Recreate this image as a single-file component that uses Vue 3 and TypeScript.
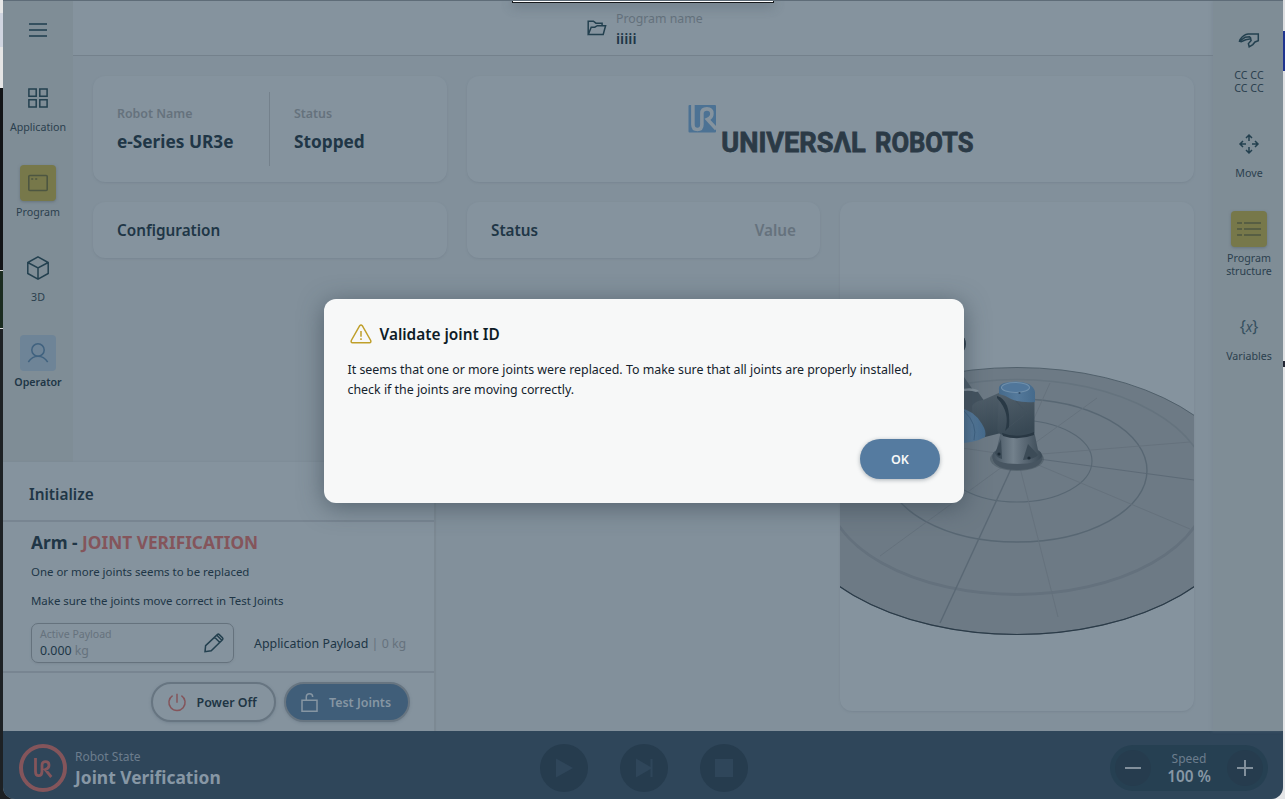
<script setup lang="ts">
interface NavItem {
  icon: string
  lines: string[]
  state?: 'active' | 'selected'
  spaced?: boolean
}

const leftNav: NavItem[] = [
  { icon: 'grid', lines: ['Application'] },
  { icon: 'program', lines: ['Program'], state: 'active' },
  { icon: 'cube', lines: ['3D'] },
  { icon: 'operator', lines: ['Operator'], state: 'selected' },
]

const rightNav: NavItem[] = [
  { icon: 'freedrive', lines: ['CC CC', 'CC CC'], spaced: true },
  { icon: 'move', lines: ['Move'] },
  { icon: 'list', lines: ['Program', 'structure'], state: 'active' },
  { icon: 'variables', lines: ['Variables'] },
]

interface Spoke {
  x: number
  y: number
  strong?: boolean
}

const spokes: Spoke[] = [
  { x: 940, y: 623, strong: true },
  { x: 1058, y: 617 },
  { x: 1194, y: 480, strong: true },
  { x: 1190, y: 529 },
  { x: 1190, y: 442 },
  { x: 1097, y: 398 },
  { x: 1050, y: 383 },
  { x: 880, y: 556 },
  { x: 955, y: 447 },
]
</script>

<template>
  <div class="desktop">
    <div class="edge edge-left">
      <i class="e1"></i><i class="e2"></i><i class="e3"></i><i class="e4"></i><i class="e5"></i><i class="e6"></i>
    </div>
    <div class="window">
      <div class="main">
        <nav class="side left">
          <svg class="burger" width="18" height="14" viewBox="0 0 18 14"><path d="M0 1h18M0 7h18M0 13h18" /></svg>
          <div v-for="item in leftNav" :key="item.icon" class="item" :class="item.state">
            <span class="box">
              <svg v-if="item.icon === 'grid'" width="20" height="20" viewBox="0 0 20 20"><path d="M.9.900h7.300v7.300H.9zM11.800.900h7.300v7.300h-7.300zM.9 11.800h7.300v7.300H.9zM11.800 11.800h7.300v7.300h-7.300z" /></svg>
              <svg v-else-if="item.icon === 'program'" width="20" height="18" viewBox="0 0 20 18"><rect x=".8" y="1.500" width="18.400" height="15" rx="1" /><path d="M3.200 5h2M7.200 5h2" /></svg>
              <svg v-else-if="item.icon === 'cube'" width="22" height="24" viewBox="0 0 22 24"><path d="M11 .9 21.200 6.500v11L11 23.100.8 17.500v-11zM.8 6.500 11 12l10.200-5.500M11 12v11" /></svg>
              <svg v-else width="22" height="20" viewBox="0 0 22 20"><circle cx="11" cy="7" r="6.200" /><path d="M1.300 19C4 15 7 13.200 11 13.200s7 1.800 9.700 5.800" /></svg>
            </span>
            <span v-for="(line, i) in item.lines" :key="i" class="label">{{ line }}</span>
          </div>
        </nav>

        <div class="center">
          <header class="topbar">
            <svg width="20" height="16" viewBox="0 0 20 16"><path d="M1.200 14.500V1.200h5.200l2.500 2h6.200v2.600M1.300 14.500 4.200 7.200h3.600l2.500-1.500h8.300l-2.400 8.800z" /></svg>
            <div><p class="pn">Program name</p><p class="pv">iiiii</p></div>
          </header>
          <section class="grid">
            <article class="card info">
              <div class="cell"><p class="k">Robot Name</p><p class="v">e-Series UR3e</p></div>
              <div class="cell second"><p class="k">Status</p><p class="v">Stopped</p></div>
            </article>
            <article class="card brand">
              <svg width="286" height="52" viewBox="688 104 286 52">
                <rect x="688.500" y="105" width="27.500" height="27.500" rx="1" fill="#4c7294" />
                <path d="M692.900 104.500v20q0 5 4.500 5t4.500-5v-11q0-4.600 5-4.600t5 4.800q0 3.800-4.400 5.700l8.800 9.600" fill="none" stroke="#85939e" stroke-width="3.600" />
                <text x="721.300" y="152.300" textLength="144.500" lengthAdjust="spacingAndGlyphs" class="wordmark">UNIVERSΛL</text>
                <text x="875" y="152.300" textLength="98.500" lengthAdjust="spacingAndGlyphs" class="wordmark">ROBOTS</text>
              </svg>
            </article>
            <article class="card title"><span>Configuration</span></article>
            <article class="card title"><span>Status</span><span class="muted">Value</span></article>
            <article class="card robot">
              <svg width="354" height="509" viewBox="840 202 354 509" preserveAspectRatio="xMidYMid slice">
                <defs>
                  <linearGradient id="base" x1="0" x2="1"><stop offset="0" stop-color="#43525f" /><stop offset=".42" stop-color="#73818c" /><stop offset=".6" stop-color="#5f6d79" /><stop offset="1" stop-color="#3a4955" /></linearGradient>
                  <linearGradient id="arm" x1="0" y1="0" x2=".3" y2="1"><stop offset="0" stop-color="#54626d" /><stop offset="1" stop-color="#384854" /></linearGradient>
                  <linearGradient id="cap" x1="0" x2="1"><stop offset="0" stop-color="#456a8b" /><stop offset=".5" stop-color="#54799b" /><stop offset="1" stop-color="#456a8b" /></linearGradient>
                </defs>
                <ellipse cx="1017" cy="501" rx="231" ry="133.500" fill="#6d7a85" stroke="#4c5b67" stroke-width=".9" />
                <path d="M786 501a231 133.500 0 0 0 462 0" fill="none" stroke="#2b3b48" stroke-width="1.200" />
                <ellipse cx="1017" cy="487" rx="191" ry="107.500" fill="none" stroke="#65737e" stroke-width="1.500" />
                <path d="M826 487a191 107.500 0 0 0 382 0" fill="none" stroke="#64717d" stroke-width="2.800" />
                <ellipse cx="1017" cy="470.500" rx="130" ry="71.500" fill="none" stroke="#586773" stroke-width="1.400" />
                <ellipse cx="1017" cy="461" rx="75" ry="41" fill="none" stroke="#586773" stroke-width="1.100" />
                <line v-for="(s, i) in spokes" :key="i" x1="1017" y1="456" :x2="s.x" :y2="s.y" :stroke="s.strong ? '#5a6874' : '#64717c'" :stroke-width="i === 0 ? 1.4 : 0.9" />
                <ellipse cx="961" cy="344" rx="5" ry="8" fill="#2c3b48" />
                <path d="M955 372 964 377l9 13-12 4z" fill="#4b5b67" />
                <path d="M955 392q15-7 23 0l9 13-2 13-18 8-15-5z" fill="#44535f" />
                <path d="M958 390q14-4 21 1l-3 1q-9-3-20 1z" fill="#84919b" />
                <path d="M972 406q3-5 11-6l18-8 10 32-6 8-20 5q-9 2-12-3z" fill="url(#arm)" />
                <ellipse cx="1017" cy="459" rx="27" ry="12" fill="#45535e" opacity=".5" />
                <path d="M992.500 456q0-4 4-6l4-17q16 8 34 0l3.500 17q4 2 4 6 0 13-25 13t-24.500-13z" fill="url(#base)" />
                <path d="M992.500 455q3 9 25 9t25-9v3q-2 12-25 12t-25-12z" fill="#475561" />
                <path d="M1001 439l-6 14q2 5 7 6zM1028 444l-5 16q12-1 15-5z" fill="#3c4b57" />
                <circle cx="999" cy="454" r="1.600" fill="#1d2b36" /><circle cx="1029" cy="458" r="1.600" fill="#1d2b36" />
                <path d="M999 391q6-5 35.500 2v40q-16 7-32 2-6-2-5-8z" fill="url(#arm)" />
                <path d="M997 396q14 4 12 31l-4 4q6-18-8-33z" fill="#293945" />
                <path d="M1009 427l18-14-12-13" fill="none" stroke="#43525e" stroke-width="1" />
                <path d="M1002 433q16 6 32-1v3q-16 6-31 1z" fill="#293844" />
                <path d="M999 390q-1-5 5-7 14-3.500 25 1 5 3 6 8v10q-16 1-24-3-6-4-12-5z" fill="url(#cap)" />
                <ellipse cx="1015.500" cy="387.500" rx="14" ry="5" fill="#50769a" stroke="#6f8fab" stroke-width="1.100" />
                <circle cx="1019.500" cy="393" r="1.100" fill="#334f69" />
                <path d="M959 408q15 2 23 16 5 8 3 13-10 6-27 6z" fill="url(#cap)" />
                <path d="M964 411q14 13 10 29" fill="none" stroke="#3c6081" stroke-width=".9" />
              </svg>
            </article>
          </section>
        </div>

        <nav class="side right">
          <div v-for="item in rightNav" :key="item.icon" class="item" :class="[item.state, { spaced: item.spaced }]">
            <span class="box">
              <svg v-if="item.icon === 'freedrive'" width="20" height="14" viewBox="0 0 20 14"><path d="M19.300 1v6.800l-3.300 1.200-2.200 2.600-3.600 2.300-.8-3.300 2.700-3-.4-1.800-5 .9-4.500 2-1.700-.4.500-1.700C3.500 3 6 1.200 9 1zM1.500 7.500l4.500-3.200 4.600-.5 1.400 1.600" /></svg>
              <svg v-else-if="item.icon === 'move'" width="20" height="20" viewBox="0 0 20 20"><path d="M10 7V1.200M7 4l3-3 3 3M10 13v5.800M7 16l3 3 3-3M7 10H1.200M4 7l-3 3 3 3M13 10h5.800M16 7l3 3-3 3" /></svg>
              <svg v-else-if="item.icon === 'list'" width="24" height="16" viewBox="0 0 24 16"><path d="M0 2h5M7 2h17M0 8h5M7 8h17M0 14h5M7 14h17" /></svg>
              <span v-else class="var">{<em>x</em>}</span>
            </span>
            <span v-for="(line, i) in item.lines" :key="i" class="label">{{ line }}</span>
          </div>
        </nav>

        <aside class="panel">
          <h2>Initialize</h2>
          <div class="arm">
            <h3>Arm - <span>JOINT VERIFICATION</span></h3>
            <p>One or more joints seems to be replaced</p>
            <p>Make sure the joints move correct in Test Joints</p>
            <div class="payload">
              <div class="field">
                <div><p class="fl">Active Payload</p><p class="fv">0.000 <span>kg</span></p></div>
                <svg width="20" height="20" viewBox="0 0 20 20"><path d="M1 18.700 1.600 12.600 13.300 1.600q1-.9 2 0l3.200 3.200q.9 1 0 2L7.200 17.700zM10.600 4.200l5.500 5.500M12.800 2.300l5.300 5.200" /></svg>
              </div>
              <span class="app">Application Payload <span>| 0 kg</span></span>
            </div>
          </div>
          <div class="actions">
            <button class="off">
              <svg width="18" height="19" viewBox="0 0 18 19"><path d="M9 .8v9M4.600 2.600a8.100 8.100 0 1 0 8.800 0" /></svg>
              <span>Power Off</span>
            </button>
            <button class="test">
              <svg width="17" height="19" viewBox="0 0 17 19"><path d="M1 7.200h15v11H1zM5.300 7V4q0-3.200 3.200-3.200T11.700 4" /></svg>
              <span>Test Joints</span>
            </button>
          </div>
        </aside>
      </div>

      <footer class="footer">
        <div class="state">
          <span class="ring"><svg width="20" height="22" viewBox="0 0 20 22"><path d="M2.500 1v13.500q0 4.200 3.200 4.200T9 14.500V8.700Q9 4.700 12.500 4.700T16 8.200q0 3.200-3.700 4.400l6 7.400" /></svg></span>
          <div><p class="rs">Robot State</p><p class="jv">Joint Verification</p></div>
        </div>
        <div class="transport">
          <span><svg width="18" height="22" viewBox="0 0 18 22"><path d="M1 1.500 18 11 1 20.500z" /></svg></span>
          <span><svg width="18" height="22" viewBox="0 0 18 22"><path d="M1 1.500 15.500 10V2h2v18h-2v-8L1 20.500z" /></svg></span>
          <span><svg width="18" height="18" viewBox="0 0 18 18"><path d="M0 0h18v18H0z" /></svg></span>
        </div>
        <div class="speed">
          <span class="knob"><svg width="16" height="16" viewBox="0 0 16 16"><path d="M0 8h16" /></svg></span>
          <div><p class="sl">Speed</p><p class="sv">100 %</p></div>
          <span class="knob"><svg width="16" height="16" viewBox="0 0 16 16"><path d="M0 8h16M8 0v16" /></svg></span>
        </div>
      </footer>

      <div class="notch"></div>
      <div class="dialog">
        <h1>
          <svg width="22" height="20" viewBox="0 0 22 20"><path d="M9.700 1.700q1.300-1.600 2.600 0L20.700 16.500q.7 2-1.300 2.300H2.600q-2-.3-1.300-2.300zM11 7v5.800M11 14.300v1.700" /></svg>
          Validate joint ID
        </h1>
        <p>It seems that one or more joints were replaced. To make sure that all joints are properly installed, check if the joints are moving correctly.</p>
        <button>OK</button>
      </div>
    </div>
    <div class="edge edge-right"><i class="r1"></i><i class="r2"></i><i class="r3"></i><i class="r4"></i><i class="r5"></i></div>
  </div>
</template>

<style>
body { margin: 0; overflow: hidden; }
</style>

<style scoped>
* { box-sizing: border-box; }
p, h1, h2, h3 { margin: 0; }
svg { display: block; flex: none; fill: none; stroke: #23404f; stroke-width: 1.5; overflow: visible; }
button { font: inherit; margin: 0; padding: 0; border: 0; white-space: nowrap; }
.desktop { display: flex; width: 1285px; height: 799px; background: linear-gradient(90deg, #1d2024 50%, #e4e5e7 50%); font-family: "Noto Sans", sans-serif; color: #203646; }
.edge { display: flex; flex-direction: column; flex: none; }
.edge i { display: block; }
.edge-left { width: 3px; }
.edge-right { width: 2px; }
.e1 { height: 13px; background: #e8e8e8; }
.e2 { height: 34px; background: #d0d5e0; }
.e3 { height: 41px; background: #e5e5e5; }
.e4 { height: 182px; background: #111316; }
.e5 { height: 59px; background: #1b2c20; border-block: 1px solid #d8d8d8; }
.e6 { flex: 1; background: #1d2124; }
.r1 { height: 31px; background: #dddee0; }
.r2 { height: 40px; background: #1f3490; }
.r3 { height: 290px; background: #dfe0e2; }
.r4 { height: 6px; background: #222633; }
.r5 { flex: 1; background: #e4e5e7; }
.window { position: relative; display: flex; flex-direction: column; flex: none; width: 1280px; height: 799px; border-top: 1px solid #5e6c78; border-radius: 0 0 12px 12px; background: #82909b; overflow: hidden; }
.main { position: relative; display: flex; height: 730px; flex: none; }
.side { display: flex; flex-direction: column; align-items: center; flex: none; background: #7f8d96; }
.left { width: 70px; padding-top: 22px; }
.right { width: 70px; padding: 21px 0 0 2px; box-shadow: -1px 0 3px #73808b66; }
.burger { stroke: #35505f; stroke-width: 2; margin-bottom: 43px; }
.item { display: flex; flex-direction: column; align-items: center; padding-bottom: 31.500px; }
.box { display: flex; align-items: center; justify-content: center; width: 36px; height: 36px; margin-bottom: 4.500px; border-radius: 4px; }
.label { line-height: 13px; font-size: 10.670px; color: #2b404e; white-space: nowrap; }
.spaced .box { margin-bottom: 10.500px; }
.active .box { background: #77784a; box-shadow: 0 1px 3px #55636d99; }
.active svg { stroke: #4d5641; stroke-width: 1.600; }
.selected .box { background: #6e8497; }
.selected svg { stroke: #40627f; }
.selected .label { font-weight: 600; color: #203646; }
.var { font-size: 16px; line-height: 20px; margin-top: -1px; color: #35505f; letter-spacing: -.2px; }
.var em { font-size: 14px; }
.center { flex: 1; min-width: 0; display: flex; flex-direction: column; }
.topbar { height: 55px; display: flex; gap: 9px; padding: 8px 0 0 514px; background: #85939e; border-bottom: 1px solid #74818c; }
.topbar svg { margin-top: 11px; }
.pn { font-size: 12.300px; line-height: 19px; color: #64717c; }
.pv { font-size: 14.500px; line-height: 20px; font-weight: 600; }
.grid { display: grid; grid-template-columns: 354px 353px 354px; grid-template-rows: 106px 56px 1fr; gap: 20px; padding: 20px 19px 20px 20px; height: 675px; }
.card { background: #85939e; border-radius: 12px; box-shadow: 0 1px 2px #6b788466; }
.info { display: flex; padding: 16px 24px; }
.cell { width: 153px; border-right: 1px solid #74818c; padding-top: 12px; }
.second { border: 0; padding-left: 24px; }
.k { font-size: 12.400px; line-height: 20px; font-weight: 600; color: #65727d; }
.v { font-size: 17.250px; line-height: 24px; margin-top: 6px; font-weight: 700; white-space: nowrap; }
.brand { grid-column: span 2; padding: 28px 0 0 221px; }
.brand svg { stroke: none; }
.wordmark { font: 700 28px Roboto, sans-serif; fill: #2b3a46; stroke: #2b3a46; stroke-width: .8px; }
.title { display: flex; justify-content: space-between; align-items: center; padding: 0 24px; font-size: 15.300px; font-weight: 600; }
.muted { color: #65727d; }
.robot { grid-row: 2 / span 2; grid-column: 3; overflow: hidden; }
.robot svg { width: 100%; height: 100%; stroke: none; }
.panel { position: absolute; left: 0; top: 461px; width: 433px; height: 269px; background: #85939e; border-right: 2px solid #7c8993; display: flex; flex-direction: column; box-shadow: 0 -1px 1px #7b889255; }
.panel h2 { height: 60px; padding-left: 26px; border-bottom: 2px solid #788591; font-size: 15.400px; font-weight: 600; line-height: 65px; }
.arm { height: 151px; padding: 9px 0 0 28px; border-bottom: 2px solid #788591; }
.arm h3 { font-size: 17.300px; line-height: 24px; font-weight: 700; }
.arm h3 span { color: #84555b; }
.arm > p { font-size: 11.450px; line-height: 19px; margin-top: 7px; margin-bottom: 10px; }
.arm > p + p { margin-top: 0; }
.payload { display: flex; align-items: center; gap: 20px; margin-top: 13px; }
.field { display: flex; align-items: center; justify-content: space-between; width: 203px; height: 40px; padding: 0 9px 0 8px; border: 1px solid #65727d; border-radius: 7px; box-shadow: 0 1px 2px #6b788455; }
.fl { font-size: 10.550px; line-height: 15px; color: #65727d; }
.fv { font-size: 12.350px; line-height: 17px; }
.fv span, .app span { color: #65727d; }
.app { font-size: 12.380px; }
.actions { flex: 1; display: flex; justify-content: flex-end; align-items: center; gap: 8.500px; padding: 0 24.500px 0 0; }
.actions button { display: flex; align-items: center; height: 40px; width: 125px; border: 2px solid #677581; border-radius: 20px; font-size: 12.450px; font-weight: 600; color: #203544; box-shadow: 0 1px 3px #6070807a; }
.actions .off { padding-left: 15px; gap: 11px; background: #85939e; }
.off svg { stroke: #84555b; }
.actions .test { width: 125.500px; padding-left: 15px; gap: 11px; background: #405e79; color: #8696a3; }
.test svg { stroke: #8696a3; }
.footer { display: grid; grid-template-columns: 1fr 208px 1fr; align-items: center; flex: 1; padding: 5px 15px 0 16px; background: #2f465a; }
.state { display: flex; align-items: center; gap: 8px; }
.ring { display: flex; align-items: center; justify-content: center; width: 48px; height: 48px; border: 4px solid #84555b; border-radius: 50%; }
.ring svg { stroke: #84555b; stroke-width: 2.800; }
.rs { font-size: 12px; line-height: 18px; color: #6c7d8d; }
.jv { font-size: 17.400px; line-height: 22px; font-weight: 700; color: #8797a5; white-space: nowrap; }
.transport { display: flex; gap: 32px; }
.transport span { display: flex; align-items: center; justify-content: center; width: 48px; height: 48px; border-radius: 50%; background: #263c4e; }
.transport svg { fill: #2f465a; stroke: none; }
.speed { justify-self: end; display: flex; align-items: center; justify-content: space-between; width: 158px; height: 46px; padding: 0 5px; border-radius: 23px; background: #264052; text-align: center; }
.knob { display: flex; align-items: center; justify-content: center; width: 36px; height: 36px; border-radius: 50%; background: #263c4e; }
.knob svg { stroke: #82909c; stroke-width: 2; }
.sl { font-size: 12px; line-height: 17px; color: #6c7d8d; }
.sv { font-size: 15.300px; line-height: 18px; font-weight: 600; color: #8797a5; }
.notch { position: absolute; left: 509px; top: -3px; width: 262px; height: 5px; background: #fff; border: 1px solid #16191c; box-shadow: 0 3px 12px #3d4b5777; }
.dialog { position: absolute; left: 321px; top: 298px; width: 640px; height: 204px; padding: 24px 24px 24px 23.500px; border-radius: 12px; background: #f7f8f8; box-shadow: 0 4px 24px #34434f99; color: #14222c; display: flex; flex-direction: column; }
.dialog h1 { display: flex; align-items: center; gap: 8px; height: 24px; padding-left: 2px; font-size: 15.400px; line-height: 22px; font-weight: 600; color: #0e1c26; }
.dialog h1 svg { stroke: #bf9f2a; margin-top: -2px; }
.dialog p { margin-top: 13px; font-size: 12.400px; line-height: 20px; white-space: normal; }
.dialog button { align-self: flex-end; margin-top: auto; width: 80px; height: 40px; border-radius: 20px; background: #557ba0; color: #f7f8f8; font-size: 12.500px; font-weight: 600; box-shadow: 0 1px 4px #34434f66; }
</style>
